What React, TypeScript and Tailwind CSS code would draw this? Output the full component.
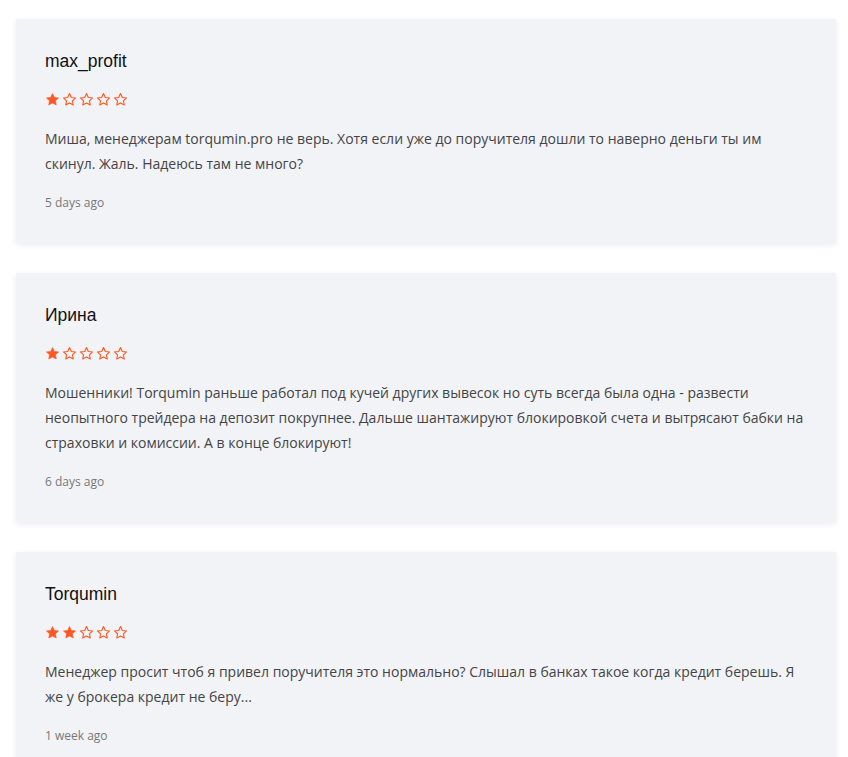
import React from 'react';

type Review = {
  name: string;
  rating: number;
  text: string;
  date: string;
};

const reviews: Review[] = [
  {
    name: 'max_profit',
    rating: 1,
    text: 'Миша, менеджерам torqumin.pro не верь. Хотя если уже до поручителя дошли то наверно деньги ты им скинул. Жаль. Надеюсь там не много?',
    date: '5 days ago',
  },
  {
    name: 'Ирина',
    rating: 1,
    text: 'Мошенники! Torqumin раньше работал под кучей других вывесок но суть всегда была одна - развести неопытного трейдера на депозит покрупнее. Дальше шантажируют блокировкой счета и вытрясают бабки на страховки и комиссии. А в конце блокируют!',
    date: '6 days ago',
  },
  {
    name: 'Torqumin',
    rating: 2,
    text: 'Менеджер просит чтоб я привел поручителя это нормально? Слышал в банках такое когда кредит берешь. Я же у брокера кредит не беру...',
    date: '1 week ago',
  },
];

const Star: React.FC<{ filled: boolean }> = ({ filled }) => (
  <svg viewBox="0 0 24 24" className="w-[15px] h-[15px]">
    <path
      d="M12 2.5l2.9 6.2 6.8.8-5 4.6 1.3 6.7L12 17.5l-6 3.3 1.3-6.7-5-4.6 6.8-.8z"
      fill={filled ? '#ff5722' : 'none'}
      stroke="#ff5722"
      strokeWidth={filled ? 1 : 1.8}
      strokeLinejoin="round"
    />
  </svg>
);

const ReviewCard: React.FC<{ review: Review }> = ({ review }) => (
  <div className="bg-[#f2f3f7] px-[29px] pt-[30px] pb-[31px] shadow-[0_2px_6px_rgba(0,0,0,0.08)]">
    <h3 className="text-[17.5px] leading-[24px] text-[#111] font-['Liberation_Sans',Arial,sans-serif]">
      {review.name}
    </h3>
    <div className="flex gap-[2px] mt-[19px]">
      {[1, 2, 3, 4, 5].map(i => (
        <Star key={i} filled={i <= review.rating} />
      ))}
    </div>
    <p className="mt-[19px] text-[14px] leading-[25px] text-[#444]">{review.text}</p>
    <p className="mt-[18px] text-[12px] leading-[18px] text-[#777]">{review.date}</p>
  </div>
);

export default function App() {
  return (
    <div className="min-h-screen bg-white pt-[19px] font-['Open_Sans',sans-serif]">
      <div className="ml-[16px] w-[820px] flex flex-col gap-[30px]">
        {reviews.map(r => (
          <ReviewCard key={r.name} review={r} />
        ))}
      </div>
    </div>
  );
}
